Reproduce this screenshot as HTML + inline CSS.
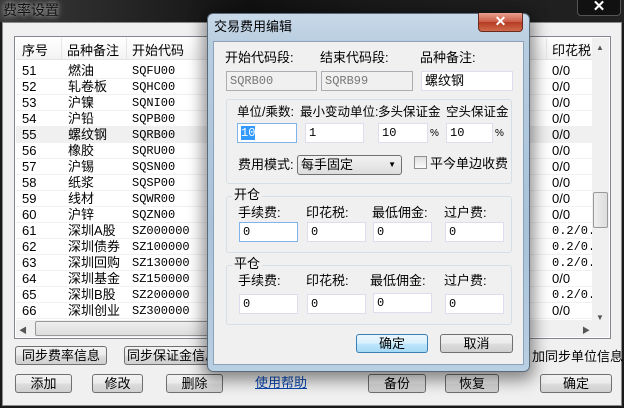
<!DOCTYPE html>
<html><head><meta charset="utf-8"><style>
*{margin:0;padding:0;box-sizing:border-box}
body{width:624px;height:408px;overflow:hidden;background:#1a1a1a;font-family:"Liberation Sans","Noto Sans CJK SC",sans-serif;font-size:12px;color:#000;position:relative}
.a{position:absolute}
.btn{position:absolute;border:1px solid #707070;border-radius:3px;background:linear-gradient(#f2f2f2,#ebebeb 50%,#dddddd 51%,#cfcfcf);text-align:center;font-size:12px;line-height:17px;white-space:nowrap;overflow:hidden}
.inp{position:absolute;background:#fff;border:1px solid #abadb3;height:20px;font-size:12px;line-height:18px;padding-left:3px;font-family:"Liberation Mono","Noto Sans CJK SC",monospace}
.grp{position:absolute;border:1px solid #d5dfe5;border-radius:3px}
.lbl{position:absolute;font-size:13px;line-height:16px;white-space:nowrap}
.row{position:absolute;left:16px;width:576px;height:16px;line-height:16px;font-size:13px;border-bottom:1px solid #f0f0f0}
.row span{position:absolute}
.mono{font-family:"Liberation Mono","Noto Sans CJK SC",monospace;font-size:12px}
</style></head><body>
<div class="a" style="left:0;top:0;width:624px;height:22px;background:linear-gradient(90deg,#3a3a3a,#111 40%,#1a1a1a 60%,#222)"></div>
<div class="lbl" style="left:3px;top:2px;color:#111;font-size:14px;text-shadow:0 0 4px #bbb,0 0 8px #999">费率设置</div>
<div class="a" style="left:577px;top:-3px;width:44px;height:19px;border:1px solid #555;border-radius:4px;background:#111;color:#fff;text-align:center;font-weight:bold;font-size:15px;line-height:17px">✕</div>
<div class="a" style="left:2px;top:22px;width:620px;height:384px;background:#f0f0f0;border:1px solid #8a8a8a"></div>
<div class="a" style="left:14px;top:36px;width:597px;height:303px;border:1px solid #828790;background:#fff"></div>
<div class="a" style="left:16px;top:38px;width:576px;height:22px;background:linear-gradient(#fff,#f3f3f3);border-bottom:1px solid #e5e5e5"></div>
<div class="lbl" style="left:22px;top:43px">序号</div>
<div class="a" style="left:61px;top:38px;width:1px;height:22px;background:#e5e5e5"></div>
<div class="lbl" style="left:67px;top:43px">品种备注</div>
<div class="a" style="left:126px;top:38px;width:1px;height:22px;background:#e5e5e5"></div>
<div class="lbl" style="left:132px;top:43px">开始代码</div>
<div class="a" style="left:546px;top:38px;width:1px;height:22px;background:#e5e5e5"></div>
<div class="lbl" style="left:552px;top:43px">印花税</div>
<div class="row" style="top:63px"><span style="left:6px">51</span><span style="left:52px">燃油</span><span class="mono" style="left:116px">SQFU00</span><span style="left:536px">0/0</span></div>
<div class="row" style="top:79px"><span style="left:6px">52</span><span style="left:52px">轧卷板</span><span class="mono" style="left:116px">SQHC00</span><span style="left:536px">0/0</span></div>
<div class="row" style="top:95px"><span style="left:6px">53</span><span style="left:52px">沪镍</span><span class="mono" style="left:116px">SQNI00</span><span style="left:536px">0/0</span></div>
<div class="row" style="top:111px"><span style="left:6px">54</span><span style="left:52px">沪铅</span><span class="mono" style="left:116px">SQPB00</span><span style="left:536px">0/0</span></div>
<div class="row" style="top:127px;background:#f0f0f0"><span style="left:6px">55</span><span style="left:52px">螺纹钢</span><span class="mono" style="left:116px">SQRB00</span><span style="left:536px">0/0</span></div>
<div class="row" style="top:143px"><span style="left:6px">56</span><span style="left:52px">橡胶</span><span class="mono" style="left:116px">SQRU00</span><span style="left:536px">0/0</span></div>
<div class="row" style="top:159px"><span style="left:6px">57</span><span style="left:52px">沪锡</span><span class="mono" style="left:116px">SQSN00</span><span style="left:536px">0/0</span></div>
<div class="row" style="top:175px"><span style="left:6px">58</span><span style="left:52px">纸浆</span><span class="mono" style="left:116px">SQSP00</span><span style="left:536px">0/0</span></div>
<div class="row" style="top:191px"><span style="left:6px">59</span><span style="left:52px">线材</span><span class="mono" style="left:116px">SQWR00</span><span style="left:536px">0/0</span></div>
<div class="row" style="top:207px"><span style="left:6px">60</span><span style="left:52px">沪锌</span><span class="mono" style="left:116px">SQZN00</span><span style="left:536px">0/0</span></div>
<div class="row" style="top:223px"><span style="left:6px">61</span><span style="left:52px">深圳A股</span><span class="mono" style="left:116px">SZ000000</span><span class="mono" style="left:536px">0.2/0.2</span></div>
<div class="row" style="top:239px"><span style="left:6px">62</span><span style="left:52px">深圳债券</span><span class="mono" style="left:116px">SZ100000</span><span class="mono" style="left:536px">0.2/0.2</span></div>
<div class="row" style="top:255px"><span style="left:6px">63</span><span style="left:52px">深圳回购</span><span class="mono" style="left:116px">SZ130000</span><span class="mono" style="left:536px">0.2/0.2</span></div>
<div class="row" style="top:271px"><span style="left:6px">64</span><span style="left:52px">深圳基金</span><span class="mono" style="left:116px">SZ150000</span><span style="left:536px">0/0</span></div>
<div class="row" style="top:287px"><span style="left:6px">65</span><span style="left:52px">深圳B股</span><span class="mono" style="left:116px">SZ200000</span><span class="mono" style="left:536px">0.2/0.2</span></div>
<div class="row" style="top:303px"><span style="left:6px">66</span><span style="left:52px">深圳创业</span><span class="mono" style="left:116px">SZ300000</span><span style="left:536px">0/0</span></div>
<div class="a" style="left:592px;top:38px;width:17px;height:282px;background:#f0f0f0"></div>
<div class="lbl" style="left:596px;top:40px;font-size:8px;color:#555">▲</div>
<div class="lbl" style="left:596px;top:310px;font-size:8px;color:#555">▼</div>
<div class="a" style="left:593px;top:192px;width:15px;height:36px;border:1px solid #999;border-radius:2px;background:linear-gradient(90deg,#eee,#ddd)"></div>
<div class="a" style="left:16px;top:320px;width:593px;height:17px;background:#f0f0f0"></div>
<div class="lbl" style="left:19px;top:323px;font-size:8px;color:#555">◀</div>
<div class="lbl" style="left:582px;top:323px;font-size:8px;color:#555">▶</div>
<div class="a" style="left:35px;top:321px;width:200px;height:15px;border:1px solid #999;border-radius:2px;background:linear-gradient(#eee,#ddd)"></div>
<div class="btn" style="left:15px;top:346px;width:92px;height:19px;font-size:13px">同步费率信息</div>
<div class="btn" style="left:124px;top:346px;width:100px;height:19px;font-size:13px;text-align:left;padding-left:2px">同步保证金信息</div>
<div class="lbl" style="left:532px;top:349px">加同步单位信息</div>
<div class="btn" style="left:15px;top:374px;width:57px;height:19px;font-size:13px">添加</div>
<div class="btn" style="left:92px;top:374px;width:51px;height:19px;font-size:13px">修改</div>
<div class="btn" style="left:166px;top:374px;width:57px;height:19px;font-size:13px">删除</div>
<div class="lbl" style="left:255px;top:375px;color:#0645ad;text-decoration:underline">使用帮助</div>
<div class="btn" style="left:368px;top:374px;width:58px;height:19px;font-size:13px">备份</div>
<div class="btn" style="left:445px;top:374px;width:54px;height:19px;font-size:13px">恢复</div>
<div class="btn" style="left:540px;top:374px;width:72px;height:19px;font-size:13px">确定</div>

<div class="a" style="left:207px;top:13px;width:323px;height:359px;box-shadow:0 4px 16px 4px rgba(0,0,0,.45);border-radius:6px"></div>
<div class="a" style="left:207px;top:13px;width:323px;height:359px;border:1px solid #5a6a7a;border-radius:6px;background:linear-gradient(#c9d9e9,#b7cde0 30px,#a9c2d8 60%,#b9cfe2)"></div>
<div class="lbl" style="left:214px;top:19px;font-size:13px;color:#000">交易费用编辑</div>
<div class="a" style="left:478px;top:13px;width:45px;height:19px;border:1px solid #6b2a20;border-top:none;border-radius:0 0 4px 4px;background:linear-gradient(#e8a090,#c95a44 50%,#b43a22 51%,#d06a4a);color:#fff;text-align:center;font-weight:bold;font-size:14px;line-height:17px">✕</div>
<div class="a" style="left:213px;top:41px;width:311px;height:324px;background:#f0f0f0;border:1px solid #8da2b8"></div>
<div class="lbl" style="left:225px;top:50px">开始代码段:</div>
<div class="lbl" style="left:320px;top:50px">结束代码段:</div>
<div class="lbl" style="left:420px;top:50px">品种备注:</div>
<div class="inp" style="left:226px;top:71px;width:91px;color:#777;background:#f0f0f0">SQRB00</div>
<div class="inp" style="left:321px;top:71px;width:92px;color:#777;background:#f0f0f0">SQRB99</div>
<div class="inp" style="left:421px;top:71px;width:92px;font-size:13px;font-family:'Liberation Sans','Noto Sans CJK SC',sans-serif;border-color:#dde">螺纹钢</div>
<div class="grp" style="left:226px;top:99px;width:286px;height:85px"></div>
<div class="lbl" style="left:237px;top:104px;font-size:12.5px">单位/乘数:</div>
<div class="lbl" style="left:300px;top:104px;font-size:12.5px">最小变动单位:</div>
<div class="lbl" style="left:378px;top:104px;font-size:12.5px">多头保证金</div>
<div class="lbl" style="left:446px;top:104px;font-size:12.5px">空头保证金</div>
<div class="inp" style="left:237px;top:123px;width:60px;border-color:#7eb4ea"><span style="background:#3399ff;color:#fff">10</span></div>
<div class="inp" style="left:305px;top:123px;width:59px;border-color:#dde">1</div>
<div class="inp" style="left:378px;top:123px;width:50px;border-color:#dde">10</div>
<div class="lbl" style="left:430px;top:126px;font-size:10px">%</div>
<div class="inp" style="left:446px;top:123px;width:47px;border-color:#dde">10</div>
<div class="lbl" style="left:495px;top:126px;font-size:10px">%</div>
<div class="lbl" style="left:238px;top:157px">费用模式:</div>
<div class="a" style="left:297px;top:155px;width:105px;height:20px;border:1px solid #707070;border-radius:3px;background:linear-gradient(#f2f2f2,#ddd);font-size:13px;line-height:18px;padding-left:3px">每手固定<span style="position:absolute;right:5px;top:0;font-size:8px">▼</span></div>
<div class="a" style="left:414px;top:156px;width:13px;height:13px;border:1px solid #8f8f8f;background:linear-gradient(#e0e0e0,#fafafa)"></div>
<div class="lbl" style="left:430px;top:156px">平今单边收费</div>
<div class="grp" style="left:226px;top:196px;width:286px;height:57px"></div>
<div class="lbl" style="left:232px;top:187px;background:#f0f0f0;padding:0 2px">开仓</div>
<div class="lbl" style="left:238px;top:205px">手续费:</div>
<div class="lbl" style="left:306px;top:205px">印花税:</div>
<div class="lbl" style="left:372px;top:205px">最低佣金:</div>
<div class="lbl" style="left:444px;top:205px">过户费:</div>
<div class="inp" style="left:239px;top:222px;width:59px;border-color:#7eb4ea">0</div>
<div class="inp" style="left:307px;top:222px;width:59px;border-color:#dde">0</div>
<div class="inp" style="left:373px;top:222px;width:59px;border-color:#dde">0</div>
<div class="inp" style="left:445px;top:222px;width:59px;border-color:#dde">0</div>
<div class="grp" style="left:226px;top:265px;width:286px;height:60px"></div>
<div class="lbl" style="left:232px;top:256px;background:#f0f0f0;padding:0 2px">平仓</div>
<div class="lbl" style="left:238px;top:273px">手续费:</div>
<div class="lbl" style="left:306px;top:273px">印花税:</div>
<div class="lbl" style="left:370px;top:273px">最低佣金:</div>
<div class="lbl" style="left:444px;top:273px">过户费:</div>
<div class="inp" style="left:239px;top:294px;width:59px;border-color:#dde">0</div>
<div class="inp" style="left:307px;top:294px;width:59px;border-color:#dde">0</div>
<div class="inp" style="left:373px;top:293px;width:59px;border-color:#dde">0</div>
<div class="inp" style="left:445px;top:294px;width:59px;border-color:#dde">0</div>
<div class="btn" style="left:356px;top:334px;width:72px;height:19px;font-size:13px;border-color:#3c7fb1;background:linear-gradient(#eaf6fd,#d9f0fc 50%,#bee6fd 51%,#a7d9f5)">确定</div>
<div class="btn" style="left:440px;top:334px;width:73px;height:19px;font-size:13px">取消</div>
</body></html>
